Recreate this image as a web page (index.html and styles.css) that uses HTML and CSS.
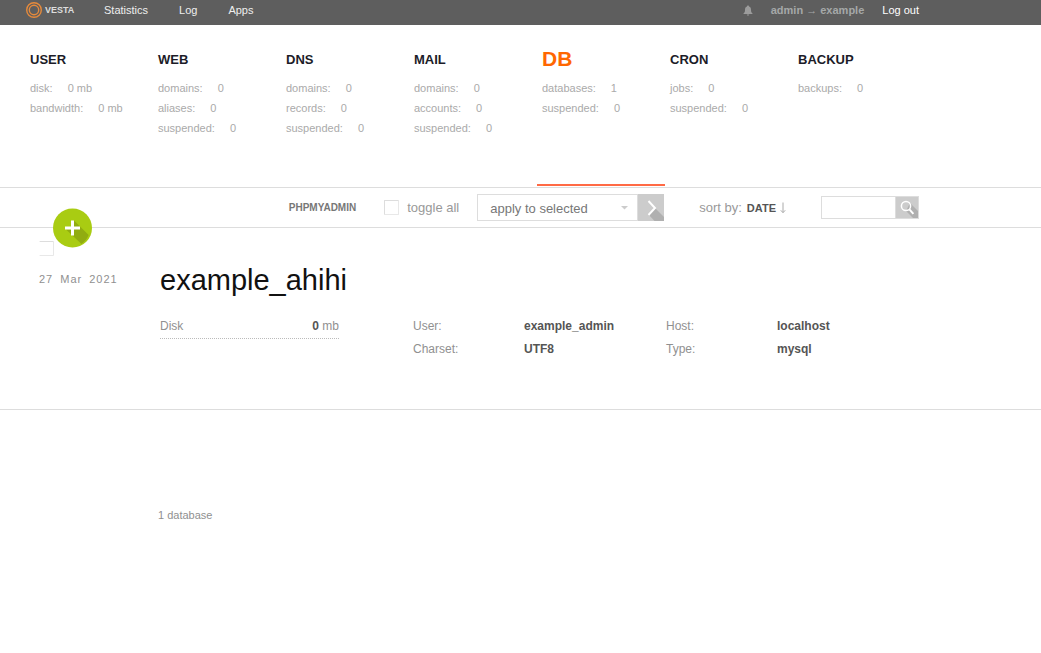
FILE: index.html
```html
<!DOCTYPE html>
<html lang="en">
<head>
<meta charset="utf-8">
<meta name="viewport" content="width=device-width, initial-scale=1">
<title>Vesta - DB</title>
<link rel="stylesheet" href="styles.css">
</head>
<body>
<header class="topbar">
  <div class="topbar-inner">
    <a class="logo" href="#" aria-label="Vesta">
      <svg class="logo-mark" viewBox="0 0 16 16" aria-hidden="true"><circle cx="8" cy="8" r="7.3"/><circle cx="8" cy="8" r="4.7"/></svg>
      <span class="logo-name">VESTA</span>
    </a>
    <nav class="top-links">
      <a href="#">Statistics</a>
      <a href="#">Log</a>
      <a href="#">Apps</a>
    </nav>
    <div class="account">
      <button class="bell" type="button" aria-label="Notifications">
        <svg viewBox="0 0 10 11" aria-hidden="true"><path d="M5 .6C5.7.6 6 1 6 1.500 7.600 2 8 3.300 8 5c0 2 .5 2.600 1.500 3.400V9H.5v-.6C1.500 7.600 2 7 2 5c0-1.700.4-3 2-3.500C4 1 4.300.6 5 .6zM3.800 9.400h2.400C6 10.400 5.600 10.600 5 10.600s-1-.2-1.200-1.200z"/></svg>
      </button>
      <a class="identity" href="#">admin → example</a>
      <a class="logout" href="#">Log out</a>
    </div>
  </div>
</header>

<nav class="sections">
  <div class="sections-inner">
    <a class="section" href="#"><span class="section-name">USER</span>
      <span class="stat">disk:<span>0 mb</span></span><span class="stat">bandwidth:<span>0 mb</span></span></a>
    <a class="section" href="#"><span class="section-name">WEB</span>
      <span class="stat">domains:<span>0</span></span><span class="stat">aliases:<span>0</span></span><span class="stat">suspended:<span>0</span></span></a>
    <a class="section" href="#"><span class="section-name">DNS</span>
      <span class="stat">domains:<span>0</span></span><span class="stat">records:<span>0</span></span><span class="stat">suspended:<span>0</span></span></a>
    <a class="section" href="#"><span class="section-name">MAIL</span>
      <span class="stat">domains:<span>0</span></span><span class="stat">accounts:<span>0</span></span><span class="stat">suspended:<span>0</span></span></a>
    <a class="section active" href="#" aria-current="page"><span class="section-name">DB</span>
      <span class="stat">databases:<span>1</span></span><span class="stat">suspended:<span>0</span></span></a>
    <a class="section" href="#"><span class="section-name">CRON</span>
      <span class="stat">jobs:<span>0</span></span><span class="stat">suspended:<span>0</span></span></a>
    <a class="section" href="#"><span class="section-name">BACKUP</span>
      <span class="stat">backups:<span>0</span></span></a>
  </div>
</nav>

<div class="toolbar">
  <button class="add" type="button" aria-label="Add database">
    <svg viewBox="0 0 40 40" aria-hidden="true"><circle class="add-disc" cx="20.500" cy="20" r="19.500"/><path class="add-shade" d="M22 12.500l14.600 14.600A19 19 0 0 1 29.500 36L14 21.500h8z"/><path class="add-plus" d="M20.500 12.500v15M13 20h15"/></svg>
  </button>
  <div class="toolbar-inner">
    <a class="pma" href="#">PHPMYADMIN</a>
    <label class="toggle"><input class="tick" type="checkbox">toggle all</label>
    <form class="bulk">
      <select aria-label="Bulk action"><option>apply to selected</option></select>
      <svg class="caret" viewBox="0 0 7 4" aria-hidden="true"><path d="M0 0h7L3.500 3.500z"/></svg>
      <button type="button" aria-label="Apply">
        <svg viewBox="0 0 26 27" aria-hidden="true"><path class="shade" d="M17 14l9 9v4h-9.500l-5.500-6z"/><path class="stroke" d="M10.500 7l6.500 7-6.500 7"/></svg>
      </button>
    </form>
    <div class="sort"><span>sort by:</span><a href="#">DATE
      <svg viewBox="0 0 6 12" aria-hidden="true"><path d="M3 .5v10M.8 8.300L3 10.700l2.200-2.400"/></svg></a></div>
    <form class="search">
      <input type="text" aria-label="Search">
      <button type="button" aria-label="Search">
        <svg viewBox="0 0 22 21" aria-hidden="true"><path class="shade" d="M14 6l8 8v7h-5l-7-7z"/><circle class="stroke thin" cx="10" cy="9" r="4.600"/><path class="stroke" d="M13.400 12.400l4 4.400"/></svg>
      </button>
    </form>
  </div>
</div>

<main>
  <article class="record">
    <div class="record-side">
      <input class="tick tick-open" type="checkbox" aria-label="Select example_ahihi">
      <time class="date" datetime="2021-03-27"><span>27</span><span>Mar</span><span>2021</span></time>
    </div>
    <div class="record-body">
      <h1>example_ahihi</h1>
      <div class="details">
        <div class="disk"><span>Disk</span><span><b>0</b> mb</span></div>
        <dl><dt>User:</dt><dd>example_admin</dd><dt>Charset:</dt><dd>UTF8</dd></dl>
        <dl><dt>Host:</dt><dd>localhost</dd><dt>Type:</dt><dd>mysql</dd></dl>
      </div>
    </div>
  </article>
</main>
<footer class="count">1 database</footer>
</body>
</html>
```
FILE: styles.css
```css
* { box-sizing: border-box; }

body {
  margin: 0;
  background: #fff;
  color: #909090;
  font: 11px/20px "Liberation Sans", Arial, sans-serif;
}

a { color: inherit; text-decoration: none; }
button { padding: 0; border: 0; background: none; cursor: pointer; }
svg { display: block; fill: none; }

.topbar { background: #5e5e5e; color: #eee; }
.topbar-inner {
  display: flex;
  align-items: center;
  max-width: 919px;
  height: 25px;
  padding: 0 0 5px 26px;
}
.logo { display: flex; align-items: center; gap: 3px; width: 78px; }
.logo-mark { width: 16px; height: 16px; stroke: #e58a3c; stroke-width: 1.4; }
.logo-name { font: bold 9px/16px "Liberation Sans", sans-serif; color: #ddd; }
.top-links { display: flex; gap: 31px; }
.account { display: flex; align-items: center; margin-left: auto; }
.bell { width: 10px; margin-right: 18px; }
.bell svg { width: 10px; height: 11px; fill: #9c9c9c; }
.identity { margin-right: 18px; color: #a5a8a8; font-weight: bold; }
.logout { color: #fff; }

.sections { border-bottom: 1px solid #ddd; }
.sections-inner {
  display: grid;
  grid-template-columns: repeat(7, 1fr);
  max-width: 921px;
  min-height: 162px;
  padding: 23px 0 1px 25px;
}
.section { padding-left: 5px; border-bottom: 2px solid transparent; color: #aaa; }
.section-name {
  display: block;
  margin-bottom: 6px;
  color: #1c1c28;
  font-size: 13px;
  font-weight: bold;
  line-height: 24px;
}
.stat { display: block; }
.stat span { margin-left: 15px; }
.active { border-color: #ff6a45; }
.active .section-name { margin-bottom: 8px; color: #ff6701; font-size: 21px; line-height: 22px; }

.toolbar { position: relative; border-bottom: 1px solid #ddd; }
.toolbar-inner {
  display: flex;
  align-items: center;
  justify-content: flex-end;
  max-width: 919px;
  height: 39px;
  color: #999;
  font-size: 13px;
}
.add { position: absolute; left: 52px; bottom: -21px; width: 40px; height: 40px; border-radius: 50%; }
.add svg { width: 40px; height: 40px; }
.add-disc { fill: #a9cc12; }
.add-shade { fill: #91ac11; }
.add-plus { stroke: #fff; stroke-width: 3; }
.pma { margin-right: 28px; color: #777; font-size: 10px; font-weight: bold; }
.toggle { display: flex; align-items: center; gap: 8px; margin-right: 18px; }
.tick {
  width: 15px;
  height: 15px;
  margin: 0;
  border: 1px solid #ddd;
  border-right-color: #e8e8e8;
  border-bottom-color: #e8e8e8;
  border-radius: 1px;
  background: #fff;
  appearance: none;
}
.tick-open { border-left-color: transparent; }
.bulk { position: relative; display: flex; width: 187px; margin-right: 35px; }
.bulk select {
  flex: 1;
  min-width: 0;
  height: 27px;
  padding: 2px 12px 0;
  border: 1px solid #ddd;
  border-radius: 0;
  background: #fff;
  color: #777;
  font: inherit;
  appearance: none;
}
.caret { position: absolute; top: 12px; right: 36px; width: 7px; height: 4px; fill: #ccc; }
.bulk button { width: 26px; height: 27px; background: #ccc; }
.bulk button svg { width: 26px; height: 27px; }
.shade { fill: #b0b0b0; }
.stroke { stroke: #fff; stroke-width: 2; }
.thin { stroke-width: 1.5; }
.sort { display: flex; gap: 5px; margin-right: 35px; }
.sort a { display: flex; align-items: center; gap: 4px; color: #555; font-size: 11px; font-weight: bold; }
.sort svg { width: 6px; height: 12px; stroke: #aaa; }
.search { display: flex; width: 98px; }
.search input {
  flex: 1;
  min-width: 0;
  height: 23px;
  border: 1px solid #ddd;
  border-right: 0;
  background: #fff;
}
.search button { width: 24px; height: 23px; border: 1px solid #ddd; background: #ccc; }
.search svg { width: 22px; height: 21px; }

.record {
  display: flex;
  min-height: 182px;
  padding: 13px 0 0 39px;
  border-bottom: 1px solid #ddd;
}
.record-side { display: flex; flex-direction: column; gap: 13px; width: 121px; }
.date { display: flex; gap: 7px; letter-spacing: 1px; }
.record-body { flex: 1; max-width: 759px; padding-top: 20px; }
h1 { margin: 0 0 16px; color: #111; font-size: 29px; font-weight: normal; line-height: 38px; }
.details {
  display: grid;
  grid-template-columns: repeat(3, 1fr);
  align-items: start;
  font-size: 12px;
  line-height: 23px;
}
.disk {
  display: flex;
  justify-content: space-between;
  width: 179px;
  border-bottom: 1px dotted #bbb;
}
.disk b { color: #555; }
dl { display: grid; grid-template-columns: 111px 1fr; margin: 0; }
dd { margin: 0; color: #555; font-weight: bold; }

.count { padding: 95px 0 0 158px; }
```
